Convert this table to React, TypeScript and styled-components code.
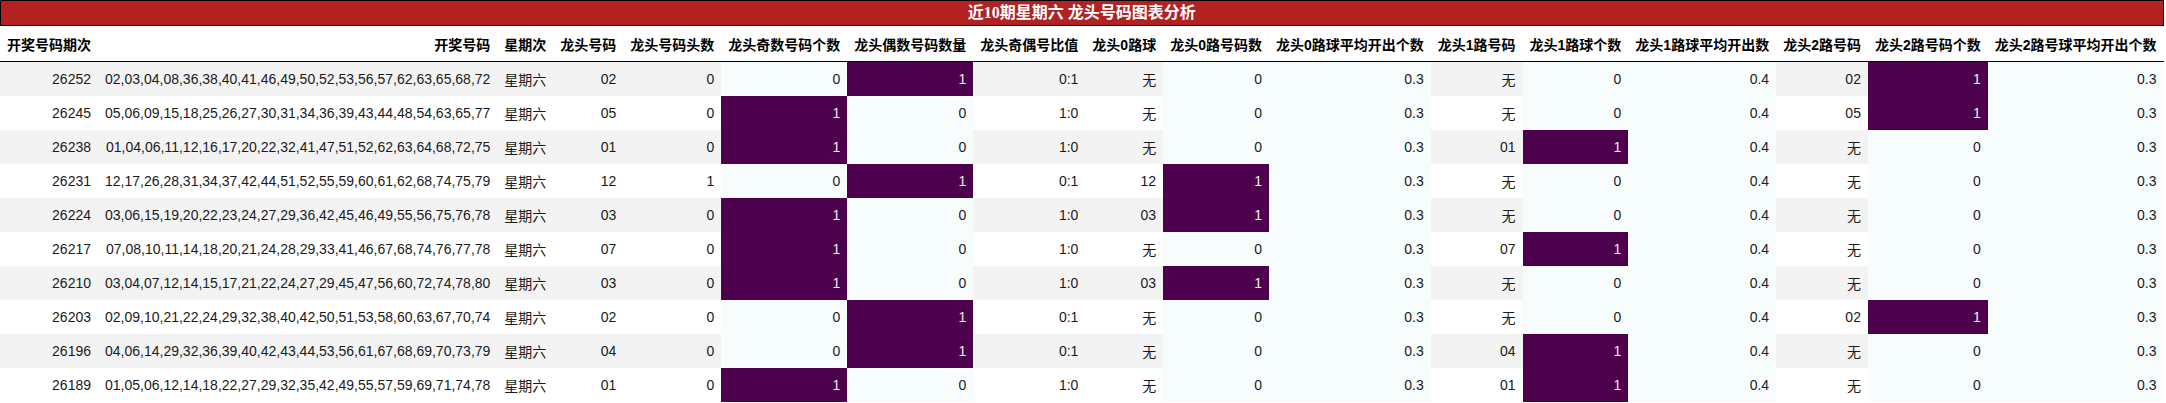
import styled, { createGlobalStyle } from 'styled-components';

type Tone = 'plain' | 'low' | 'high';

const GlobalStyle = createGlobalStyle`
    body {
        margin: 0;
        background: #ffffff;
        font-family: "Liberation Sans", "Noto Sans CJK SC", sans-serif;
    }
`;

const headers = [
    '开奖号码期次',
    '开奖号码',
    '星期次',
    '龙头号码',
    '龙头号码头数',
    '龙头奇数号码个数',
    '龙头偶数号码数量',
    '龙头奇偶号比值',
    '龙头0路球',
    '龙头0路号码数',
    '龙头0路球平均开出个数',
    '龙头1路号码',
    '龙头1路球个数',
    '龙头1路球平均开出数',
    '龙头2路号码',
    '龙头2路号码个数',
    '龙头2路号球平均开出个数',
];

// columns coloured by value (pandas background_gradient, BuPu)
const gradientCols = [5, 6, 9, 10, 12, 13, 15, 16];

const rows: string[][] = [
    ['26252', '02,03,04,08,36,38,40,41,46,49,50,52,53,56,57,62,63,65,68,72', '星期六', '02', '0', '0', '1', '0:1', '无', '0', '0.3', '无', '0', '0.4', '02', '1', '0.3'],
    ['26245', '05,06,09,15,18,25,26,27,30,31,34,36,39,43,44,48,54,63,65,77', '星期六', '05', '0', '1', '0', '1:0', '无', '0', '0.3', '无', '0', '0.4', '05', '1', '0.3'],
    ['26238', '01,04,06,11,12,16,17,20,22,32,41,47,51,52,62,63,64,68,72,75', '星期六', '01', '0', '1', '0', '1:0', '无', '0', '0.3', '01', '1', '0.4', '无', '0', '0.3'],
    ['26231', '12,17,26,28,31,34,37,42,44,51,52,55,59,60,61,62,68,74,75,79', '星期六', '12', '1', '0', '1', '0:1', '12', '1', '0.3', '无', '0', '0.4', '无', '0', '0.3'],
    ['26224', '03,06,15,19,20,22,23,24,27,29,36,42,45,46,49,55,56,75,76,78', '星期六', '03', '0', '1', '0', '1:0', '03', '1', '0.3', '无', '0', '0.4', '无', '0', '0.3'],
    ['26217', '07,08,10,11,14,18,20,21,24,28,29,33,41,46,67,68,74,76,77,78', '星期六', '07', '0', '1', '0', '1:0', '无', '0', '0.3', '07', '1', '0.4', '无', '0', '0.3'],
    ['26210', '03,04,07,12,14,15,17,21,22,24,27,29,45,47,56,60,72,74,78,80', '星期六', '03', '0', '1', '0', '1:0', '03', '1', '0.3', '无', '0', '0.4', '无', '0', '0.3'],
    ['26203', '02,09,10,21,22,24,29,32,38,40,42,50,51,53,58,60,63,67,70,74', '星期六', '02', '0', '0', '1', '0:1', '无', '0', '0.3', '无', '0', '0.4', '02', '1', '0.3'],
    ['26196', '04,06,14,29,32,36,39,40,42,43,44,53,56,61,67,68,69,70,73,79', '星期六', '04', '0', '0', '1', '0:1', '无', '0', '0.3', '04', '1', '0.4', '无', '0', '0.3'],
    ['26189', '01,05,06,12,14,18,22,27,29,32,35,42,49,55,57,59,69,71,74,78', '星期六', '01', '0', '1', '0', '1:0', '无', '0', '0.3', '01', '1', '0.4', '无', '0', '0.3'],
];

function toneFor(col: number, value: string): Tone {
    if (!gradientCols.includes(col)) return 'plain';
    const nums = rows.map((r) => parseFloat(r[col]));
    const max = Math.max(...nums);
    const min = Math.min(...nums);
    return max > min && parseFloat(value) === max ? 'high' : 'low';
}

export default function App() {
    return (
        <>
            <GlobalStyle />
            <Table>
                <Caption>近10期星期六 龙头号码图表分析</Caption>
                <thead>
                    <tr>
                        {headers.map((h) => (
                            <HeadCell key={h}>{h}</HeadCell>
                        ))}
                    </tr>
                </thead>
                <tbody>
                    {rows.map((r) => (
                        <Row key={r[0]}>
                            {r.map((v, i) => (
                                <Cell key={i} $tone={toneFor(i, v)}>
                                    {v}
                                </Cell>
                            ))}
                        </Row>
                    ))}
                </tbody>
            </Table>
        </>
    );
}

const Table = styled.table`
    border-collapse: separate;
    border-spacing: 0;
    font-size: 14px;
    white-space: nowrap;
`;

const Caption = styled.caption`
    height: 24px;
    line-height: 24px;
    border: 1px solid #000000;
    background: #b22222;
    color: #ffffff;
    font-family: "Liberation Serif", "Noto Sans CJK SC", serif;
    font-size: 16px;
    font-weight: bold;
    text-align: center;
`;

const HeadCell = styled.th`
    height: 35px;
    padding: 0 7px;
    border-bottom: 1px solid #000000;
    text-align: right;
    font-weight: bold;
    color: #000000;
`;

const Row = styled.tr`
    height: 34px;

    &:nth-child(odd) {
        background: #f3f3f3;
    }
`;

const Cell = styled.td<{ $tone: Tone }>`
    padding: 0 7px;
    text-align: right;
    color: ${(p) => (p.$tone === 'high' ? '#f1f1f1' : '#1a1a1a')};
    background: ${(p) =>
        p.$tone === 'high' ? '#4d004b' : p.$tone === 'low' ? '#f7fcfd' : 'transparent'};
`;
